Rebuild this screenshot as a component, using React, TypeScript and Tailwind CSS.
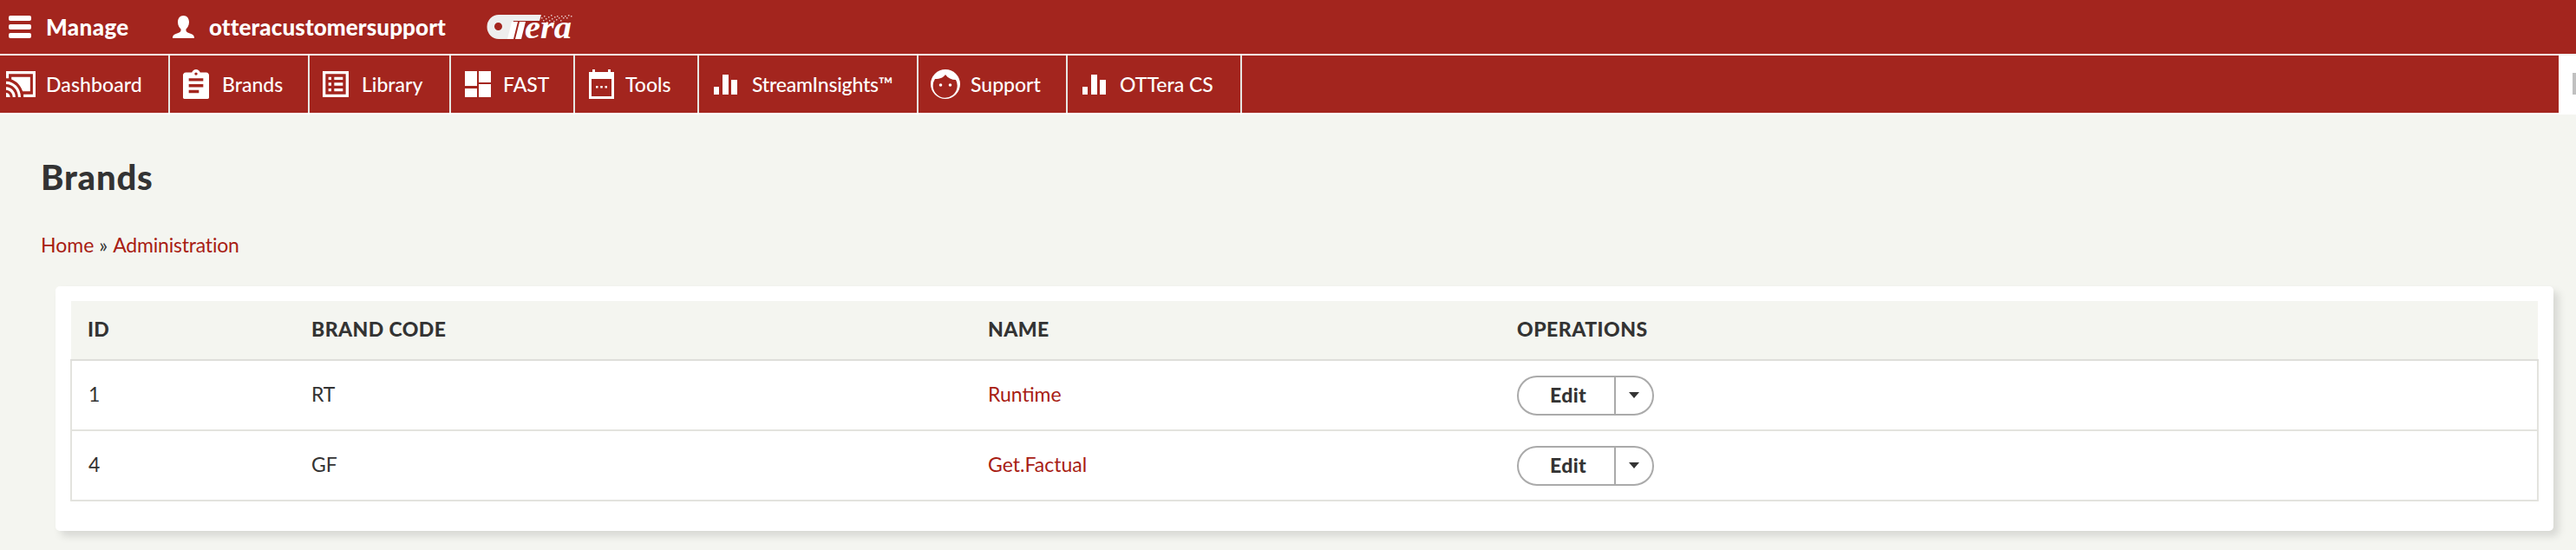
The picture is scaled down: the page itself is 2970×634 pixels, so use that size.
import type { ReactNode } from 'react';

const ChartIcon = ({ className }: { className: string }) => (
  <svg viewBox="0 0 27 23" className={className} fill="white">
    <rect x="0" y="14" width="6" height="9" />
    <rect x="10" y="0" width="7" height="23" />
    <rect x="20" y="6" width="7" height="17" />
  </svg>
);

interface NavItem {
  label: ReactNode;
  cell: string;
  gap: string;
  icon: ReactNode;
}

const NAV_ITEMS: NavItem[] = [
  {
    label: 'Dashboard',
    cell: 'w-[196px] pl-[7px]',
    gap: 'ml-[12px] tracking-[0.1px]',
    icon: (
      <svg viewBox="1 3 22 18" className="w-[34px] h-[30px]" preserveAspectRatio="none" fill="white">
        <path d="M1 18v3h3c0-1.66-1.34-3-3-3zm0-4v2c2.76 0 5 2.24 5 5h2c0-3.87-3.13-7-7-7zm18-7H5v1.63c3.96 1.28 7.09 4.41 8.37 8.37H19V7zM1 10v2c4.97 0 9 4.03 9 9h2c0-6.08-4.93-11-11-11zM23 3H1v5h2V5h18v14h-7v2h9z" />
      </svg>
    ),
  },
  {
    label: 'Brands',
    cell: 'w-[161px] pl-[15px]',
    gap: 'ml-[15px]',
    icon: (
      <svg viewBox="3 1 18 20" className="w-[30px] h-[34px]" preserveAspectRatio="none" fill="white">
        <path d="M19 3h-4.18C14.4 1.84 13.3 1 12 1c-1.3 0-2.4.84-2.82 2H5c-.6 0-2 .4-2 2v15c0 .6.4 1 1 1h16c.6 0 1-.4 1-1V5c0-1.6-1.4-2-2-2zm-7 0c.55 0 1 .45 1 1s-.45 1-1 1-1-.45-1-1 .45-1 1-1zm2 14H7v-2h7v2zm3-4H7v-2h10v2zm0-4H7V7h10v2z" />
      </svg>
    ),
  },
  {
    label: 'Library',
    cell: 'w-[163px] pl-[15px]',
    gap: 'ml-[15px]',
    icon: (
      <svg viewBox="3 3 18 18" className="w-[30px] h-[30px]" fill="white">
        <path fillRule="evenodd" d="M3 3h18v18H3zM5 5v14h14V5zM11 7h6v2h-6zm0 4h6v2h-6zm0 4h6v2h-6zM7 7h2v2H7zm0 4h2v2H7zm0 4h2v2H7z" />
      </svg>
    ),
  },
  {
    label: 'FAST',
    cell: 'w-[143px] pl-[16px]',
    gap: 'ml-[14px]',
    icon: (
      <svg viewBox="0 0 30 30" className="w-[30px] h-[30px]" fill="white">
        <rect x="0" y="0" width="14" height="17" />
        <rect x="0" y="20" width="14" height="10" />
        <rect x="16" y="0" width="14" height="13" />
        <rect x="16" y="15" width="14" height="15" />
      </svg>
    ),
  },
  {
    label: 'Tools',
    cell: 'w-[143px] pl-[16px]',
    gap: 'ml-[13px]',
    icon: (
      <svg viewBox="0 0 29 34" className="w-[29px] h-[34px]" fill="white">
        <path fillRule="evenodd" d="M4 0h3v3h15V0h3v3h4v31H0V3h4zM3 11v20h23V11z" />
        <rect x="8" y="19" width="2.500" height="2.500" />
        <rect x="13.250" y="19" width="2.500" height="2.500" />
        <rect x="18.500" y="19" width="2.500" height="2.500" />
      </svg>
    ),
  },
  {
    label: 'StreamInsights™',
    cell: 'w-[253px] pl-[17px]',
    gap: 'ml-[17px] tracking-[-0.2px]',
    icon: <ChartIcon className="w-[27px] h-[23px]" />,
  },
  {
    label: 'Support',
    cell: 'w-[172px] pl-[14px]',
    gap: 'ml-[12px]',
    icon: (
      <svg viewBox="0 0 34 34" className="w-[34px] h-[34px]" fill="white">
        <path fillRule="evenodd" d="M17 0a17 17 0 1 1 0 34a17 17 0 0 1 0-34zM5 11a14 14 0 1 0 24 1c-5 0-9-2-12-6c-2 3-6 5-12 5z" />
        <circle cx="11.5" cy="18" r="1.8" />
        <circle cx="22.5" cy="18" r="1.8" />
      </svg>
    ),
  },
  {
    label: 'OTTera CS',
    cell: 'w-[201px] pl-[17px]',
    gap: 'ml-[16px]',
    icon: <ChartIcon className="w-[27px] h-[23px]" />,
  },
];

const BRANDS = [
  { id: 1, code: 'RT', name: 'Runtime' },
  { id: 4, code: 'GF', name: 'Get.Factual' },
];

// dust coming off the top of the logo
const SPECKS = [
  [62, 3], [64, 6], [65, 1], [67, 4], [68, 8], [70, 2], [71, 6], [73, 0], [74, 4], [76, 7], [77, 2],
  [79, 5], [80, 1], [82, 3], [84, 6], [85, 1], [87, 3], [89, 1], [91, 3], [93, 0], [96, 1],
];

function Logo() {
  return (
    <svg viewBox="0 0 98 28" className="w-[98px] h-[28px] overflow-visible">
      <path
        fillRule="evenodd"
        fill="#eeeeee"
        d="M13 0H62L60 7H30L27 18L24 28H13A13.500 14 0 0 1 13 0zM12.500 9a4.500 4.500 0 1 0 0 9a4.500 4.500 0 0 0 0-9z"
      />
      <path fill="#ffffff" d="M28 8H35L30 28H23zM37 8H44L39 28H32z" />
      {SPECKS.map(([x, y]) => (
        <rect key={`${x}-${y}`} x={x} y={y} width="1.5" height="1.5" fill="#ffffff" opacity="0.7" />
      ))}
      <text
        x="43"
        y="27"
        fill="#ffffff"
        fontFamily="'Liberation Serif', serif"
        fontStyle="italic"
        fontWeight="700"
        fontSize="38"
        textLength="54"
        lengthAdjust="spacingAndGlyphs"
      >
        era
      </text>
    </svg>
  );
}

function EditButton() {
  return (
    <div className="flex w-[158px] h-[46px] rounded-full border-2 border-[#aaaaaa] bg-white">
      <button className="w-[112px] border-r-2 border-[#aaaaaa] pl-[4px] text-[23px] font-black text-[#333333] tracking-[0.3px]">
        Edit
      </button>
      <span className="flex-1 flex items-center justify-center">
        <svg viewBox="0 0 12 7" className="w-[12px] h-[7px]" fill="#333333">
          <path d="M0 0h12L6 7z" />
        </svg>
      </span>
    </div>
  );
}

export default function App() {
  return (
    <div className="h-[634px] w-full overflow-hidden bg-[#f4f5f0] text-[#333333] font-['Lato',sans-serif]">
      <header className="h-[62px] bg-[#a3251e] flex items-center text-white text-[26px] font-black">
        <svg viewBox="0 0 26 26" className="ml-[10px] w-[26px] h-[26px]" fill="white">
          <rect x="0" y="0" width="26" height="6" rx="2" />
          <rect x="0" y="10" width="26" height="6" rx="2" />
          <rect x="0" y="20" width="26" height="6" rx="2" />
        </svg>
        <span className="ml-[17px] w-[97px] whitespace-nowrap tracking-[0.4px]">Manage</span>
        <svg viewBox="0 0 25 26" className="ml-[49px] w-[25px] h-[26px]" fill="white">
          <path d="M12.5 0c4 0 6.5 3 6.5 7.500c0 4-2 6.500-3.500 8c-.5 2 .5 3.500 3 4.500c4 1.500 6.500 2 6.500 6H0c0-4 2.500-4.500 6.500-6c2.500-1 3.500-2.500 3-4.500C8 14 6 11.500 6 7.500 6 3 8.500 0 12.500 0z" />
        </svg>
        <span className="ml-[17px] w-[272px] whitespace-nowrap tracking-[0.1px]">otteracustomersupport</span>
        <span className="ml-[49px] flex">
          <Logo />
        </span>
      </header>

      <nav className="mt-[2px] h-[68px] bg-white flex items-start">
        <div className="w-[2950px] h-[66px] bg-[#a3251e] flex">
          {NAV_ITEMS.map((item, i) => (
            <a
              key={i}
              className={`${item.cell} h-full flex items-center border-r-2 border-[#e6e6e2] text-white text-[23px] font-medium whitespace-nowrap`}
            >
              {item.icon}
              <span className={item.gap}>{item.label}</span>
            </a>
          ))}
        </div>
        <div className="ml-auto mt-[20px] w-[4px] h-[25px] bg-[#c0c0c0]" />
      </nav>

      <h1 className="ml-[47px] mt-[49px] text-[40px] leading-[46px] font-black tracking-[0.8px]">Brands</h1>

      <div className="ml-[47px] mt-[40px] flex gap-[6px] text-[23px] leading-[30px]">
        <a className="text-[#a81d14]">Home</a>
        <span>»</span>
        <a className="text-[#a81d14] tracking-[-0.2px]">Administration</a>
      </div>

      <section className="ml-[64px] mr-[26px] mt-[33px] h-[282px] bg-white rounded-[5px] px-[17px] pt-[17px] shadow-[6px_6px_10px_rgba(0,0,0,0.12)]">
        <table className="w-full table-fixed border-collapse text-[23px]">
          <colgroup>
            <col className="w-[258px]" />
            <col className="w-[780px]" />
            <col className="w-[610px]" />
            <col />
          </colgroup>
          <thead>
            <tr className="h-[68px] bg-[#f4f5f0] border-b-2 border-[#dededa] text-left font-black">
              <th className="pl-[19px] pb-[2px] font-black tracking-[0.4px]">ID</th>
              <th className="pl-[19px] pb-[2px] font-black tracking-[0.4px]">BRAND CODE</th>
              <th className="pl-[19px] pb-[2px] font-black tracking-[0.4px]">NAME</th>
              <th className="pl-[19px] pb-[2px] font-black tracking-[0.5px]">OPERATIONS</th>
            </tr>
          </thead>
          <tbody>
            {BRANDS.map(b => (
              <tr key={b.id} className="h-[81px] border-2 border-[#e3e3de]">
                <td className="pl-[19px] pb-[2px]">{b.id}</td>
                <td className="pl-[19px] pb-[2px]">{b.code}</td>
                <td className="pl-[19px] pb-[2px] text-[#a81d14]">{b.name}</td>
                <td className="pl-[19px]">
                  <EditButton />
                </td>
              </tr>
            ))}
          </tbody>
        </table>
      </section>
    </div>
  );
}
